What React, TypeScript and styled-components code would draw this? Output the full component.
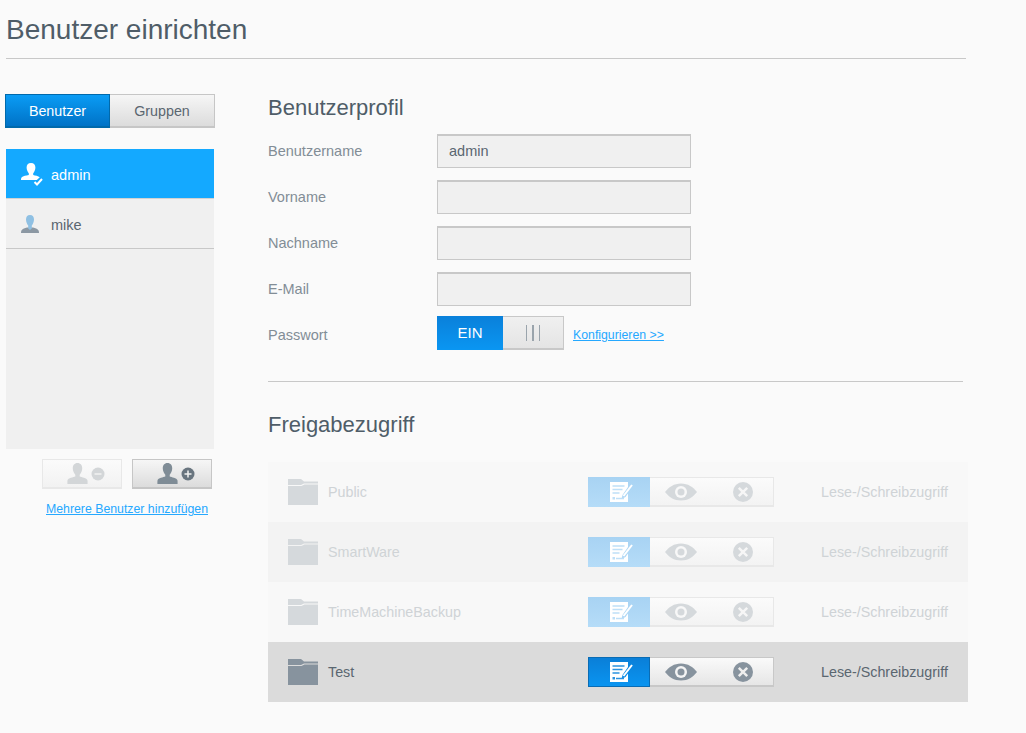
import React from "react";
import styled, { createGlobalStyle } from "styled-components";

const Global = createGlobalStyle`
  html, body { margin: 0; padding: 0; background: #fafafa; }
  body { font-family: "Liberation Sans", Arial, sans-serif; color: #5a6670; overflow: hidden; }
`;

const Page = styled.div`
  width: 1026px;
  height: 733px;
  box-sizing: border-box;
  padding: 0 0 0 5px;
`;
const Title = styled.h1`
  margin: 0 0 0 1px;
  width: 960px;
  height: 58px;
  box-sizing: content-box;
  border-bottom: 1px solid #c8c8c8;
  font-size: 28px;
  line-height: 60px;
  font-weight: 400;
  color: #4f5d68;
`;
const Body = styled.div`
  display: flex;
  padding-top: 35px;
`;
const Sidebar = styled.aside`
  width: 210px;
  flex: none;
  display: flex;
  flex-direction: column;
`;
const Tabs = styled.div`
  display: flex;
  height: 34px;
`;
const Tab = styled.div<{ $active?: boolean }>`
  box-sizing: border-box;
  flex: ${p => (p.$active ? "0 0 105px" : "1")};
  display: flex;
  align-items: center;
  justify-content: center;
  font-size: 14.3px;
  color: ${p => (p.$active ? "#fff" : "#5a6670")};
  background: ${p => (p.$active ? "linear-gradient(#0a9cf5, #0072c6)" : "linear-gradient(#f6f6f6, #dcdcdc)")};
  border: 1px solid ${p => (p.$active ? "#0069ab" : "#c6c6c6")};
  border-left-width: ${p => (p.$active ? "1px" : "0")};
  border-bottom-width: 2px;
`;
const UserList = styled.div`
  margin: 21px 1px 0;
  height: 300px;
  background: #f0f0f0;
`;
const UserRow = styled.div<{ $active?: boolean }>`
  box-sizing: border-box;
  height: 50px;
  display: flex;
  align-items: center;
  padding-left: 15px;
  font-size: 14.5px;
  color: ${p => (p.$active ? "#fff" : "#5a6670")};
  background: ${p => (p.$active ? "#14a9ff" : "transparent")};
  border-bottom: 1px solid ${p => (p.$active ? "#d2d2d2" : "#c8c8c8")};
`;
const UserIconSlot = styled.span`
  width: 30px;
  flex: none;
  display: flex;
  align-items: center;
`;
const UserName = styled.span`
  padding-top: 2px;
`;
const UserButtons = styled.div`
  display: flex;
  justify-content: flex-end;
  gap: 10px;
  margin: 10px 3px 0 0;
`;
const UserButton = styled.div<{ $disabled?: boolean }>`
  box-sizing: border-box;
  width: 80px;
  height: 30px;
  padding-left: 7px;
  display: flex;
  align-items: center;
  justify-content: center;
  gap: 3px;
  border: 1px solid ${p => (p.$disabled ? "#e8e8e8" : "#c6c6c6")};
  border-bottom-width: 2px;
  background: ${p => (p.$disabled ? "linear-gradient(#fbfbfb, #f2f2f2)" : "linear-gradient(#f6f6f6, #dcdcdc)")};
`;
const AddLink = styled.a`
  margin: 13px 0 0 41px;
  font-size: 12.3px;
  line-height: 14px;
  color: #25a8ff;
  text-decoration: underline;
`;
const Main = styled.main`
  margin-left: 53px;
  width: 700px;
`;
const Heading = styled.h2`
  margin: 0;
  font-size: 22px;
  line-height: 28px;
  font-weight: 400;
  color: #4f5d68;
`;
const Form = styled.div`
  margin-top: 12px;
  display: flex;
  flex-direction: column;
  gap: 12px;
`;
const FormRow = styled.div`
  display: flex;
  align-items: center;
  height: 34px;
  font-size: 14.5px;
  color: #828d96;
`;
const ToggleRow = styled(FormRow)`
  margin-top: -2px;
`;
const Label = styled.span<{ $low?: boolean }>`
  width: 169px;
  flex: none;
  padding-top: ${p => (p.$low ? "3px" : "0")};
`;
const Input = styled.div`
  box-sizing: border-box;
  width: 254px;
  height: 34px;
  padding: 0 0 2px 11px;
  display: flex;
  align-items: center;
  background: #f0f0f0;
  border: 1px solid #c8c8c8;
  border-top-width: 2px;
  font-size: 14.5px;
  color: #5a6670;
`;
const Toggle = styled.div`
  width: 127px;
  height: 34px;
  display: flex;
`;
const ToggleOn = styled.div`
  width: 66px;
  display: flex;
  align-items: center;
  justify-content: center;
  background: linear-gradient(#0a80da, #0a96f2);
  color: #fff;
  font-size: 15px;
  padding-bottom: 2px;
  box-sizing: border-box;
`;
const ToggleKnob = styled.div`
  flex: 1;
  box-sizing: border-box;
  display: flex;
  align-items: center;
  justify-content: center;
  gap: 5px;
  background: linear-gradient(#f0f0f0, #e4e4e4);
  border: 1px solid #c8c8c8;
  border-left: 0;
  border-bottom-width: 2px;
`;
const Grip = styled.i`
  display: block;
  width: 1.5px;
  height: 16px;
  background: #9aa4ac;
`;
const ConfigLink = styled.a`
  margin: 3px 0 0 9px;
  font-size: 12.3px;
  color: #25a8ff;
  text-decoration: underline;
`;
const Divider = styled.hr`
  margin: 31px 5px 0 0;
  width: 695px;
  height: 1px;
  border: 0;
  background: #c8c8c8;
`;
const ShareHeading = styled(Heading)`
  margin-top: 29px;
`;
const ShareList = styled.div`
  margin-top: 23px;
`;
const ShareRow = styled.div<{ $tone: number; $enabled?: boolean }>`
  height: 60px;
  display: flex;
  align-items: center;
  padding-left: 20px;
  background: ${p => (p.$enabled ? "#dbdbdb" : p.$tone ? "#f3f3f3" : "#f8f8f8")};
  font-size: 14.3px;
  color: ${p => (p.$enabled ? "#5a6670" : "#cfd3d6")};
`;
const ShareName = styled.span`
  margin-left: 10px;
  width: 260px;
`;
const Segments = styled.div`
  box-sizing: border-box;
  width: 186px;
  height: 30px;
  display: flex;
`;
const WriteSeg = styled.div<{ $enabled?: boolean }>`
  width: 62px;
  padding-left: 6px;
  display: flex;
  align-items: center;
  justify-content: center;
  background: ${p => (p.$enabled ? "linear-gradient(#0a7fd8, #0a94f0)" : "linear-gradient(#a8d3f3, #b5dcf8)")};
  border: ${p => (p.$enabled ? "1px solid #0a6cb4" : "0")};
  box-sizing: border-box;
`;
const OtherSeg = styled.div<{ $enabled?: boolean }>`
  flex: 1;
  box-sizing: border-box;
  display: flex;
  align-items: center;
  gap: 36px;
  padding-left: 15px;
  background: ${p => (p.$enabled ? "linear-gradient(#fafafa, #e6e6e6)" : "linear-gradient(#fbfbfb, #f3f3f3)")};
  border: 1px solid ${p => (p.$enabled ? "#c8c8c8" : "#e8e8e8")};
  border-left: 0;
  border-bottom-width: 2px;
`;
const Access = styled.span`
  margin-left: 47px;
`;

const Person = ({ color, size = 21 }: { color: string; size?: number }) => (
  <svg width={size} height={size} viewBox="0 0 20 20">
    <path fill={color} d="M10 0c3 0 4.500 2.200 4.500 5 0 2.600-1.300 5-2.400 6.200v1.600c1.600.7 6.900 1.400 7.400 3.600.2 1 .1 2.100.1 3.600H.4c0-1.500-.1-2.600.1-3.600.5-2.200 5.800-2.900 7.400-3.600v-1.600C6.800 10 5.500 7.600 5.500 5 5.500 2.200 7 0 10 0z" />
  </svg>
);

const MikeIcon = () => (
  <svg width="18" height="18" viewBox="0 0 18 18">
    <path fill="#8c98a3" d="M0 18c0-3 1-4 6-5.500h6c5 1.500 6 2.500 6 5.500z" />
    <path fill="#8fc0e3" d="M9 0c2.800 0 4 2 4 4.500 0 2.500-1.200 5-2.200 6v3L9 15l-1.800-1.500v-3C6.200 9.500 5 7 5 4.500 5 2 6.200 0 9 0z" />
  </svg>
);

const AdminIcon = () => (
  <svg width="24" height="24" viewBox="0 0 24 24">
    <path fill="#fff" d="M10 1c3 0 4.400 2 4.400 4.600 0 2.400-1.200 4.600-2.200 5.600V13c2 .6 5 1 6.600 2.200L15.800 18H0c0-3 1.500-4 7.800-5v-1.800C6.800 10.200 5.600 8 5.600 5.600 5.600 3 7 1 10 1z" />
    <path fill="none" stroke="#fff" strokeWidth="2" d="M13.500 20l2.500 2.500 5-5.500" />
  </svg>
);

const Badge = ({ color, glyph }: { color: string; glyph: "plus" | "minus" }) => (
  <svg width="14" height="14" viewBox="0 0 14 14">
    <circle cx="7" cy="7" r="6.500" fill={color} />
    <path stroke="#f2f2f2" strokeWidth="1.500" d={glyph === "plus" ? "M3.500 7h7M7 3.500v7" : "M3.500 7h7"} />
  </svg>
);

const Folder = ({ color }: { color: string }) => (
  <svg width="30" height="26" viewBox="0 0 30 26">
    <path fill={color} d="M0 0h13l3 2.500h14v2H16l-3 1.500H0z" />
    <path fill={color} d="M0 7h13.500l3-1.500H30V26H0z" />
  </svg>
);

const WriteIcon = ({ tone }: { tone: string }) => (
  <svg width="24" height="20" viewBox="0 0 24 20">
    <path fill="#fff" d="M0 0h18v5l-5.500 8-1 4 4-2L18 11.500V20H0z" />
    <path stroke={tone} strokeWidth="1.300" fill="none" d="M2.500 4h12M2.500 7.500h10M2.500 11h7M6 16.500h8" />
    <rect x="2.500" y="15" width="2.500" height="2.500" fill={tone} />
    <path stroke="#fff" strokeWidth="2" d="M13.500 14L22 3" />
  </svg>
);

const EyeIcon = ({ color, bg }: { color: string; bg: string }) => (
  <svg width="32" height="18" viewBox="0 0 32 18">
    <path fill={color} d="M0 9C4 4 9 .5 16 .5S28 4 32 9c-4 5-9 8.500-16 8.500S4 14 0 9z" />
    <circle cx="16" cy="9" r="6" fill={bg} />
    <circle cx="16" cy="9" r="3.500" fill={color} />
  </svg>
);

const CloseIcon = ({ color, x }: { color: string; x: string }) => (
  <svg width="20" height="20" viewBox="0 0 20 20">
    <circle cx="10" cy="10" r="10" fill={color} />
    <path stroke={x} strokeWidth="2.500" d="M5.800 5.800l8.400 8.400M14.200 5.800l-8.400 8.400" />
  </svg>
);

const fields = [
  { label: "Benutzername", value: "admin" },
  { label: "Vorname", value: "" },
  { label: "Nachname", value: "" },
  { label: "E-Mail", value: "" },
];

const shares = [
  { name: "Public", enabled: false },
  { name: "SmartWare", enabled: false },
  { name: "TimeMachineBackup", enabled: false },
  { name: "Test", enabled: true },
];

export default function App() {
  return (
    <Page>
      <Global />
      <Title>Benutzer einrichten</Title>
      <Body>
        <Sidebar>
          <Tabs>
            <Tab $active>Benutzer</Tab>
            <Tab>Gruppen</Tab>
          </Tabs>
          <UserList>
            <UserRow $active>
              <UserIconSlot>
                <AdminIcon />
              </UserIconSlot>
              <UserName>admin</UserName>
            </UserRow>
            <UserRow>
              <UserIconSlot>
                <MikeIcon />
              </UserIconSlot>
              <UserName>mike</UserName>
            </UserRow>
          </UserList>
          <UserButtons>
            <UserButton $disabled>
              <Person color="#d3d6d8" />
              <Badge color="#d3d6d8" glyph="minus" />
            </UserButton>
            <UserButton>
              <Person color="#7f8c96" />
              <Badge color="#69757f" glyph="plus" />
            </UserButton>
          </UserButtons>
          <AddLink>Mehrere Benutzer hinzufügen</AddLink>
        </Sidebar>
        <Main>
          <Heading>Benutzerprofil</Heading>
          <Form>
            {fields.map(f => (
              <FormRow key={f.label}>
                <Label>{f.label}</Label>
                <Input>{f.value}</Input>
              </FormRow>
            ))}
            <ToggleRow>
              <Label $low>Passwort</Label>
              <Toggle>
                <ToggleOn>EIN</ToggleOn>
                <ToggleKnob>
                  <Grip />
                  <Grip />
                  <Grip />
                </ToggleKnob>
              </Toggle>
              <ConfigLink>Konfigurieren &gt;&gt;</ConfigLink>
            </ToggleRow>
          </Form>
          <Divider />
          <ShareHeading>Freigabezugriff</ShareHeading>
          <ShareList>
            {shares.map((s, i) => (
              <ShareRow key={s.name} $tone={i % 2} $enabled={s.enabled}>
                <Folder color={s.enabled ? "#87939e" : "#d5d9dc"} />
                <ShareName>{s.name}</ShareName>
                <Segments>
                  <WriteSeg $enabled={s.enabled}>
                    <WriteIcon tone={s.enabled ? "#2a92e0" : "#bfe0f8"} />
                  </WriteSeg>
                  <OtherSeg $enabled={s.enabled}>
                    <EyeIcon color={s.enabled ? "#87939e" : "#d5d9dc"} bg={s.enabled ? "#f4f4f4" : "#f8f8f8"} />
                    <CloseIcon color={s.enabled ? "#87939e" : "#d5d9dc"} x={s.enabled ? "#eeeeee" : "#f6f6f6"} />
                  </OtherSeg>
                </Segments>
                <Access>Lese-/Schreibzugriff</Access>
              </ShareRow>
            ))}
          </ShareList>
        </Main>
      </Body>
    </Page>
  );
}
